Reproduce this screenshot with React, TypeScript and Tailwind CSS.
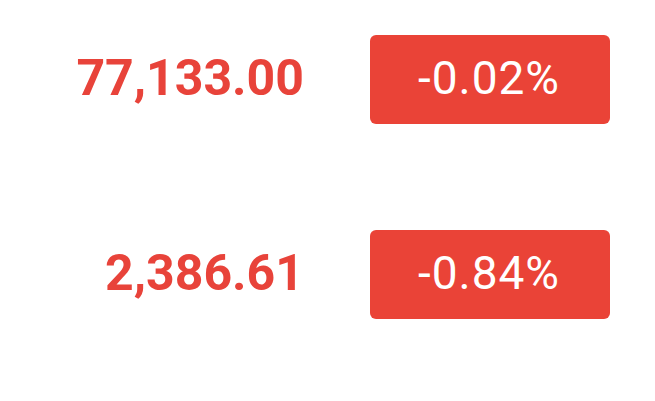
export default function App() {
  const rows = [
    { price: "77,133.00", change: "-0.02%" },
    { price: "2,386.61", change: "-0.84%" },
  ];

  return (
    <div className="h-[401px] w-[655px] bg-white pt-[35px] font-['Roboto',sans-serif]">
      <div className="grid grid-cols-[304px_240px] gap-x-[66px] gap-y-[106px]">
        {rows.map((row) => (
          <div key={row.price} className="contents">
            <div className="flex h-[89px] items-center justify-end pb-[2px] text-[50px] font-bold text-[#e8433a]">
              {row.price}
            </div>
            <div className="flex h-[89px] items-center justify-center rounded-[6px] bg-[#ea4337] pb-[2px] pr-[2px] text-[46px] tracking-[1px] text-white">
              {row.change}
            </div>
          </div>
        ))}
      </div>
    </div>
  );
}
